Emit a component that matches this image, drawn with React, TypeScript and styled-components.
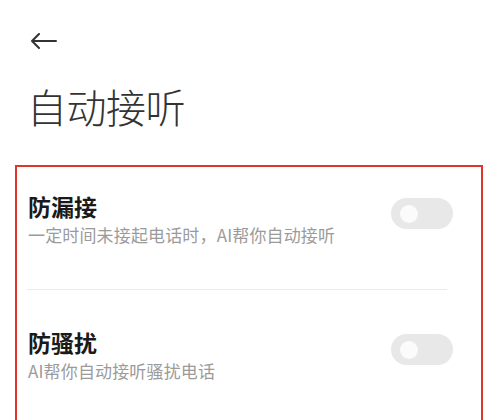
import React from "react";
import styled, { createGlobalStyle } from "styled-components";

const GlobalStyle = createGlobalStyle`
  html, body {
    margin: 0;
    padding: 0;
    background: #fff;
    overflow: hidden;
  }
  body {
    font-family: "Noto Sans CJK SC", "Noto Sans", sans-serif;
  }
`;

const Page = styled.div`
  width: 500px;
  height: 420px;
  display: flex;
  flex-direction: column;
  background: #fff;
`;

const Header = styled.div`
  display: flex;
  flex-direction: column;
  padding: 33px 0 0 30px;
`;

const BackButton = styled.button`
  width: 28px;
  height: 16px;
  padding: 0;
  border: none;
  background: none;
  display: flex;
  align-items: center;
  cursor: pointer;
`;

const Title = styled.h1`
  margin: 37px 0 0 -3px;
  font-size: 40px;
  line-height: 40px;
  font-weight: 300;
  color: #333;
  letter-spacing: -0.5px;
`;

const Card = styled.div`
  margin: 39px 0 0 15px;
  width: 468px;
  box-sizing: border-box;
  border: 2px solid #e0352b;
  border-bottom: none;
  flex: 1;
  display: flex;
  flex-direction: column;
`;

const Row = styled.div<{ $first?: boolean }>`
  display: flex;
  align-items: flex-start;
  justify-content: space-between;
  padding: ${({ $first }) => ($first ? "24px" : "37px")} 28px 43px 11px;
`;

const Texts = styled.div`
  display: flex;
  flex-direction: column;
`;

const RowTitle = styled.div`
  font-size: 23px;
  line-height: 30px;
  font-weight: 700;
  color: #1a1a1a;
`;

const RowDesc = styled.div`
  margin-top: 3px;
  font-size: 17px;
  line-height: 22px;
  letter-spacing: 0.15px;
  color: #9b9b9b;
`;

const Divider = styled.div`
  height: 1px;
  background: #ebebeb;
  margin: 0 34px 0 10px;
`;

const Track = styled.div<{ $on?: boolean }>`
  margin-top: 7px;
  width: 62px;
  height: 31px;
  border-radius: 16px;
  background: ${({ $on }) => ($on ? "#2f7cf6" : "#e8e8e8")};
  display: flex;
  align-items: center;
  justify-content: ${({ $on }) => ($on ? "flex-end" : "flex-start")};
  padding: 0 8px 0 9px;
  box-sizing: border-box;
  flex-shrink: 0;
`;

const Knob = styled.div`
  width: 18px;
  height: 18px;
  border-radius: 50%;
  background: #fbfbfb;
`;

const items = [
  { title: "防漏接", desc: "一定时间未接起电话时，AI帮你自动接听" },
  { title: "防骚扰", desc: "AI帮你自动接听骚扰电话" },
];

export default function App() {
  return (
    <Page>
      <GlobalStyle />
      <Header>
        <BackButton aria-label="返回">
          <svg width="27" height="16" viewBox="0 0 27 16" fill="none">
            <path
              d="M26 8H2M9 1L2 8l7 7"
              stroke="#333"
              strokeWidth="2"
              strokeLinecap="round"
              strokeLinejoin="round"
            />
          </svg>
        </BackButton>
        <Title>自动接听</Title>
      </Header>
      <Card>
        {items.map((it, i) => (
          <React.Fragment key={it.title}>
            {i > 0 && <Divider />}
            <Row $first={i === 0}>
              <Texts>
                <RowTitle>{it.title}</RowTitle>
                <RowDesc>{it.desc}</RowDesc>
              </Texts>
              <Track>
                <Knob />
              </Track>
            </Row>
          </React.Fragment>
        ))}
      </Card>
    </Page>
  );
}
